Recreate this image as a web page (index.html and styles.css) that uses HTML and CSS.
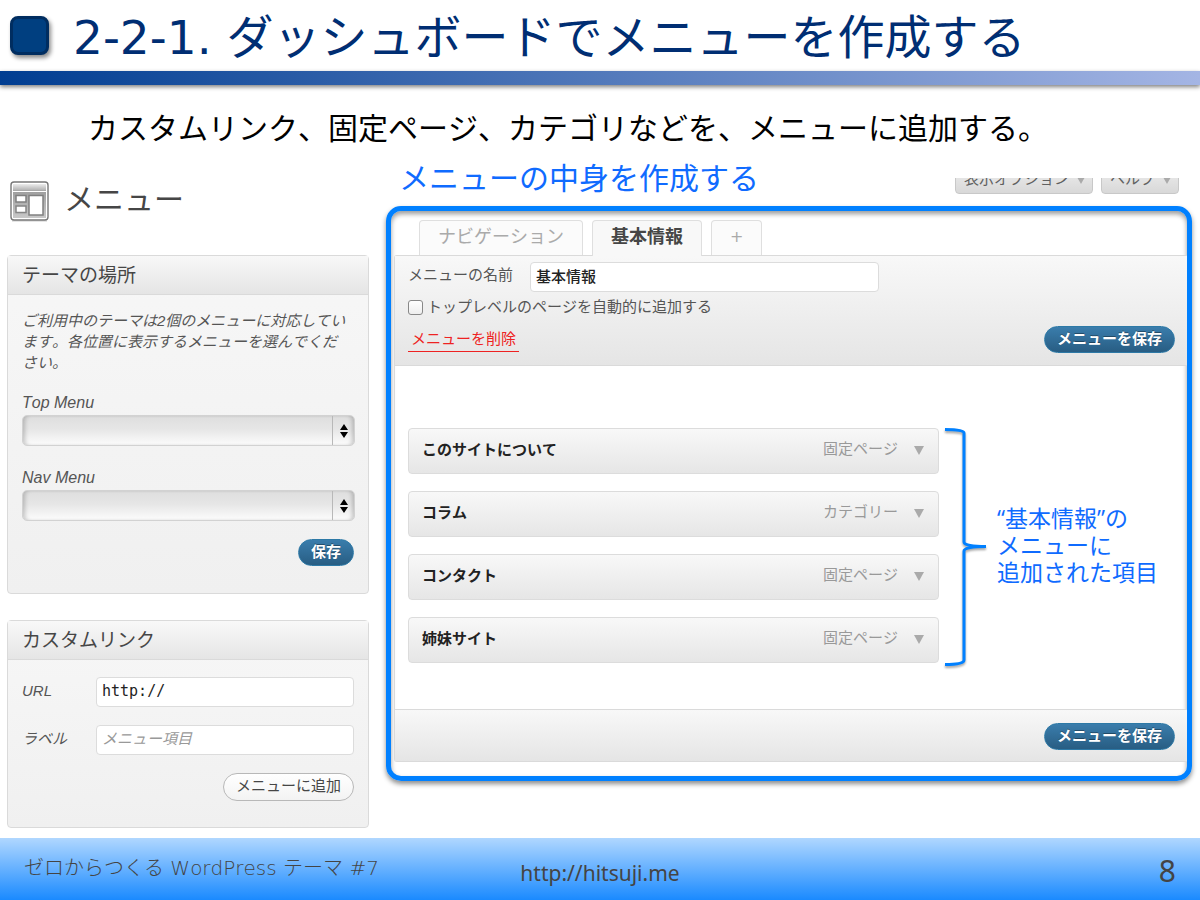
FILE: index.html
```html
<!DOCTYPE html>
<html lang="ja">
<head>
<meta charset="utf-8">
<title>2-2-1. ダッシュボードでメニューを作成する</title>
<link rel="stylesheet" href="styles.css">
</head>
<body>
<header class="slide-header">
  <span class="slide-mark"></span>
  <h1 class="slide-title">2-2-1. ダッシュボードでメニューを作成する</h1>
</header>
<div class="rule"></div>
<p class="lead">カスタムリンク、固定ページ、カテゴリなどを、メニューに追加する。</p>

<main class="columns">
  <section class="side">
    <div class="screen-heading">
      <svg class="screen-icon" viewBox="0 0 40 41" aria-hidden="true">
        <defs>
          <linearGradient id="bar" x1="0" y1="0" x2="0" y2="1"><stop offset="0" stop-color="#ececec"/><stop offset="1" stop-color="#b4b4b4"/></linearGradient>
          <linearGradient id="pane" x1="0" y1="0" x2="0" y2="1"><stop offset="0" stop-color="#a0a0a0"/><stop offset="1" stop-color="#c8c8c8"/></linearGradient>
        </defs>
        <path d="M2 40h35" stroke="#ccc" stroke-width="1"/>
        <rect x="1" y="1" width="37" height="38" rx="3" fill="#fff" stroke="#777" stroke-width="1.4"/>
        <rect x="3" y="3" width="33" height="6" fill="url(#bar)"/>
        <rect x="3" y="11" width="33" height="26" fill="url(#pane)"/>
        <path d="M3 9.500h33" stroke="#aaa"/>
        <rect x="6" y="14.500" width="10" height="6.500" fill="#fff" stroke="#808080" stroke-width="1.500"/>
        <rect x="6" y="25" width="10" height="6.500" fill="#fff" stroke="#858585" stroke-width="1.500"/>
        <rect x="19" y="14.500" width="14" height="19.500" fill="#fff" stroke="#808080" stroke-width="1.500"/>
      </svg>
      <h2 class="screen-title">メニュー</h2>
    </div>

    <form class="box">
      <h3 class="box-title">テーマの場所</h3>
      <div class="box-body">
        <p class="note">ご利用中のテーマは2個のメニューに対応しています。各位置に表示するメニューを選んでください。</p>
        <div class="location">
          <label for="top-menu">Top Menu</label>
          <div class="picker">
            <select id="top-menu"><option></option></select>
            <svg class="arrows" viewBox="0 0 8 16" aria-hidden="true"><path d="M4 1l4 6H0zM4 15l4-6H0z"/></svg>
          </div>
        </div>
        <div class="location">
          <label for="nav-menu">Nav Menu</label>
          <div class="picker">
            <select id="nav-menu"><option></option></select>
            <svg class="arrows" viewBox="0 0 8 16" aria-hidden="true"><path d="M4 1l4 6H0zM4 15l4-6H0z"/></svg>
          </div>
        </div>
        <div class="actions"><button type="button" class="btn primary">保存</button></div>
      </div>
    </form>

    <form class="box">
      <h3 class="box-title">カスタムリンク</h3>
      <div class="box-body link-body">
        <div class="field">
          <label for="url">URL</label>
          <input class="text mono" id="url" type="text" value="http://">
        </div>
        <div class="field">
          <label for="label">ラベル</label>
          <input class="text" id="label" type="text" placeholder="メニュー項目">
        </div>
        <div class="actions"><button type="button" class="btn">メニューに追加</button></div>
      </div>
    </form>
  </section>

  <section class="content">
    <div class="content-top">
      <h2 class="callout">メニューの中身を作成する</h2>
      <div class="meta-links">
        <button type="button" class="meta">表示オプション<span class="down"></span></button>
        <button type="button" class="meta">ヘルプ<span class="down"></span></button>
      </div>
    </div>
    <div class="frame">
      <nav class="tabs">
        <a class="tab" href="#navigation">ナビゲーション</a>
        <a class="tab active" href="#basic">基本情報</a>
        <a class="tab add" href="#new">+</a>
      </nav>
      <form class="editor">
        <div class="editor-head">
          <div class="name-row">
            <label for="menu-name">メニューの名前</label>
            <input class="text strong" id="menu-name" type="text" value="基本情報">
          </div>
          <div class="check-row">
            <input class="check" id="auto-add" type="checkbox">
            <label for="auto-add">トップレベルのページを自動的に追加する</label>
          </div>
          <div class="save-row">
            <a class="delete" href="#delete">メニューを削除</a>
            <button type="button" class="btn primary">メニューを保存</button>
          </div>
        </div>
        <div class="editor-body">
          <ul class="items">
            <li class="item"><span class="item-name">このサイトについて</span><span class="item-type">固定ページ</span><span class="down"></span></li>
            <li class="item"><span class="item-name">コラム</span><span class="item-type">カテゴリー</span><span class="down"></span></li>
            <li class="item"><span class="item-name">コンタクト</span><span class="item-type">固定ページ</span><span class="down"></span></li>
            <li class="item"><span class="item-name">姉妹サイト</span><span class="item-type">固定ページ</span><span class="down"></span></li>
          </ul>
          <svg class="brace" viewBox="0 0 43 240" aria-hidden="true"><path d="M1 1.500C12 1.500 20 2.500 20 5V114C20 117 29 118.500 42 118.500C29 118.500 20 120 20 123V232C20 235.500 12 236.500 1 236.500"/></svg>
          <p class="remark">“基本情報”の<br>メニューに<br>追加された項目</p>
        </div>
        <div class="editor-foot"><button type="button" class="btn primary">メニューを保存</button></div>
      </form>
    </div>
  </section>
</main>

<footer class="slide-footer">
  <span class="deck">ゼロからつくる WordPress テーマ #7</span>
  <a class="site" href="http://hitsuji.me">http://hitsuji.me</a>
  <span class="page">8</span>
</footer>
</body>
</html>
```

FILE: styles.css
```css
* { box-sizing: border-box; }

body {
  margin: 0;
  min-height: 100vh;
  display: flex;
  flex-direction: column;
  background: #fff;
  color: #555;
  font: 15px/20px "Liberation Sans", "Noto Sans CJK JP", sans-serif;
  font-kerning: none;
}

h1, h2, h3, p, ul { margin: 0; padding: 0; font-weight: 400; }
input, select, button { font: inherit; color: inherit; margin: 0; }
a { color: inherit; text-decoration: none; }

.slide-header {
  display: flex;
  align-items: center;
  gap: 24px;
  min-height: 71px;
  padding: 0 10px;
}
.slide-mark {
  flex: none;
  width: 39px;
  height: 39px;
  border: 3px solid #002d60;
  border-radius: 8px;
  background: #003f80;
  box-shadow: 2px 3px 4px rgba(0, 0, 0, .45);
}
.slide-title {
  padding-top: 4px;
  color: #002e73;
  font: 400 47px/60px "DejaVu Sans", "Noto Sans CJK JP", sans-serif;
  font-kerning: none;
}
.rule {
  height: 14px;
  background: linear-gradient(90deg, #003d91, #a4b5e4);
  box-shadow: 0 2px 4px rgba(0, 0, 0, .5);
}
.lead {
  padding: 26px 88px 22px;
  color: #000;
  font: 400 30px/30px "Noto Sans CJK JP", sans-serif;
  font-kerning: none;
}

.columns {
  flex: 1;
  display: grid;
  grid-template-columns: minmax(0, 362fr) minmax(0, 806fr);
  gap: 17px;
  padding: 0 8px 10px 7px;
}

.screen-heading {
  display: flex;
  align-items: center;
  gap: 14px;
  padding: 18px 0 33px 3px;
}
.screen-icon { width: 40px; height: 41px; }
.screen-title { padding-bottom: 4px; color: #464646; font-size: 30px; line-height: 36px; }

.box {
  border: 1px solid #dadada;
  border-radius: 4px;
  background: linear-gradient(#f7f7f7, #f0f0f0);
}
.box + .box { margin-top: 26px; }
.box-title {
  padding: 8px 14px 7px;
  border-bottom: 1px solid #dadada;
  background: linear-gradient(#f8f8f8, #e5e5e5);
  color: #464646;
  font-size: 19px;
  line-height: 23px;
}
.box-body { padding: 15px 13px 27px 14px; }
.note { padding-right: 8px; font-style: italic; line-height: 21px; }
.location { margin-top: 20px; }
.location + .location { margin-top: 22px; }
.location label { display: block; padding-bottom: 2px; font-size: 16px; font-style: italic; }
.picker { position: relative; }
.picker select {
  display: block;
  width: 100%;
  height: 31px;
  appearance: none;
  border: 1px solid #d2d2d2;
  border-radius: 5px;
  background: linear-gradient(#dedede, #e6e6e6 45%, #fcfcfc);
  box-shadow: inset 4px 0 4px -2px rgba(0, 0, 0, .2), inset -4px 0 4px -2px rgba(0, 0, 0, .2);
}
.arrows {
  position: absolute;
  top: 1px;
  right: 1px;
  width: 22px;
  height: 29px;
  padding: 7px 6px 6px 7px;
  border-left: 1px solid #b8b8b8;
  pointer-events: none;
}
.actions { display: flex; justify-content: flex-end; margin-top: 18px; padding-right: 1px; }

.btn {
  padding: 1px 12px 3px;
  border: 1px solid #b8b8b8;
  border-radius: 14px;
  background: linear-gradient(#fff, #f3f3f3);
  color: #464646;
  line-height: 22px;
}
.btn.primary {
  border-color: #2d79a6;
  background: linear-gradient(#3a7dac, #285d83);
  color: #fff;
  font-weight: 700;
  line-height: 21px;
  text-shadow: 0 -1px 0 rgba(0, 0, 0, .35);
}

.link-body { padding-top: 17px; padding-bottom: 26px; }
.field { display: flex; align-items: center; }
.field + .field { margin-top: 18px; }
.field label { flex: none; width: 74px; padding-bottom: 2px; font-style: italic; }
.field .text { margin-right: 1px; }
.text {
  flex: 1;
  min-width: 0;
  width: 100%;
  height: 30px;
  padding: 0 5px 3px;
  border: 1px solid #dcdcdc;
  border-radius: 4px;
  background: #fff;
  color: #222;
}
.text::placeholder { color: #999; font-style: italic; opacity: 1; }
.text.strong { font-weight: 500; }
.mono { font-family: "DejaVu Sans Mono", monospace; }

.content-top {
  display: flex;
  justify-content: space-between;
  align-items: flex-end;
  padding: 0 13px 12px;
}
.callout { color: #0f6bff; font-size: 30px; line-height: 31px; }
.meta-links { display: flex; align-items: flex-end; gap: 8px; height: 16px; overflow: hidden; }
.meta {
  display: flex;
  align-items: center;
  gap: 8px;
  height: 28px;
  padding: 0 7px 3px 8px;
  border: 1px solid #c8c8c8;
  border-radius: 0 0 4px 4px;
  background: linear-gradient(#eee, #d8d8d8);
  color: #606060;
}
.down {
  flex: none;
  border: 5px solid transparent;
  border-top: 9px solid #aaa;
  border-bottom: 0;
}
.meta .down { margin-top: 4px; border-width: 7px 4px 0; }

.frame {
  padding: 9px 0 14px 3px;
  border: 5px solid #0080ff;
  border-radius: 15px;
  box-shadow: 0 3px 5px rgba(0, 0, 0, .45), inset 0 3px 5px rgba(0, 0, 0, .4);
}
.tabs { display: flex; gap: 9px; padding-left: 25px; }
.tab {
  padding: 4px 18px 6px;
  border: 1px solid #dfdfdf;
  border-bottom: 0;
  border-radius: 4px 4px 0 0;
  background: #fbfbfb;
  color: #aaa;
  font-size: 18px;
  line-height: 24px;
}
.tab.active {
  position: relative;
  margin-bottom: -1px;
  background: #f8f8f8;
  color: #464646;
  font-weight: 700;
}
.tab.add { font-family: "DejaVu Sans", sans-serif; font-size: 16px; }

.editor { border: 1px solid #dadada; border-right: 0; border-radius: 3px 0 0 3px; }
.editor-head {
  padding: 6px 12px 12px 13px;
  border-bottom: 1px solid #dadada;
  background: linear-gradient(#f8f8f8, #e5e5e5);
}
.name-row { display: flex; align-items: center; }
.name-row label { flex: none; width: 122px; padding-bottom: 4px; }
.name-row .text { flex: 0 1 349px; }
.check-row { display: flex; align-items: center; gap: 4px; padding: 5px 0 9px; }
.check {
  appearance: none;
  width: 15px;
  height: 15px;
  border: 1px solid #888;
  border-radius: 3px;
  background: linear-gradient(#fff, #eee);
}
.save-row { display: flex; justify-content: space-between; align-items: center; }
.delete { padding: 2px 3px; border-bottom: 1px solid #e22; color: #e22; }

.editor-body {
  display: grid;
  grid-template-columns: minmax(0, 531fr) auto minmax(0, 190fr);
  padding: 62px 0 41px 13px;
}
.items { display: grid; gap: 17px; align-content: start; list-style: none; }
.item {
  display: flex;
  align-items: center;
  height: 46px;
  padding: 0 14px 2px 13px;
  border: 1px solid #dcdcdc;
  border-radius: 4px;
  background: linear-gradient(#f8f8f8, #e6e6e6);
}
.item-name { flex: 1; color: #222; font-weight: 700; }
.item-type { padding: 0 16px 2px 0; color: #999; }
.brace {
  width: 43px;
  height: 240px;
  margin: 0 10px 0 5px;
  overflow: visible;
  fill: none;
  stroke: #0080ff;
  stroke-width: 3;
  filter: drop-shadow(0 2px 1px rgba(0, 0, 0, .35));
}
.remark {
  align-self: center;
  padding-bottom: 6px;
  color: #0f6bff;
  font: 400 23px/27px "Open Sans", "Noto Sans CJK JP", sans-serif;
  font-kerning: none;
  white-space: nowrap;
}
.editor-foot {
  display: flex;
  justify-content: flex-end;
  padding: 13px 12px 11px;
  border-top: 1px solid #dadada;
  background: linear-gradient(#f8f8f8, #e5e5e5);
}

.slide-footer {
  display: grid;
  grid-template-columns: 1fr auto 1fr;
  align-items: center;
  min-height: 62px;
  padding: 0 24px;
  background: linear-gradient(#b0d7ff, #1a8aff);
  color: #444;
  font: 400 21px/28px "Noto Sans", "Noto Sans CJK JP", sans-serif;
}
.deck {
  padding-bottom: 3px;
  font: 300 20px/28px "DejaVu Sans", "Noto Sans CJK JP", sans-serif;
  font-kerning: none;
  white-space: nowrap;
}
.site { padding-top: 8px; }
.page { justify-self: end; padding-top: 4px; font-size: 30px; }
```
